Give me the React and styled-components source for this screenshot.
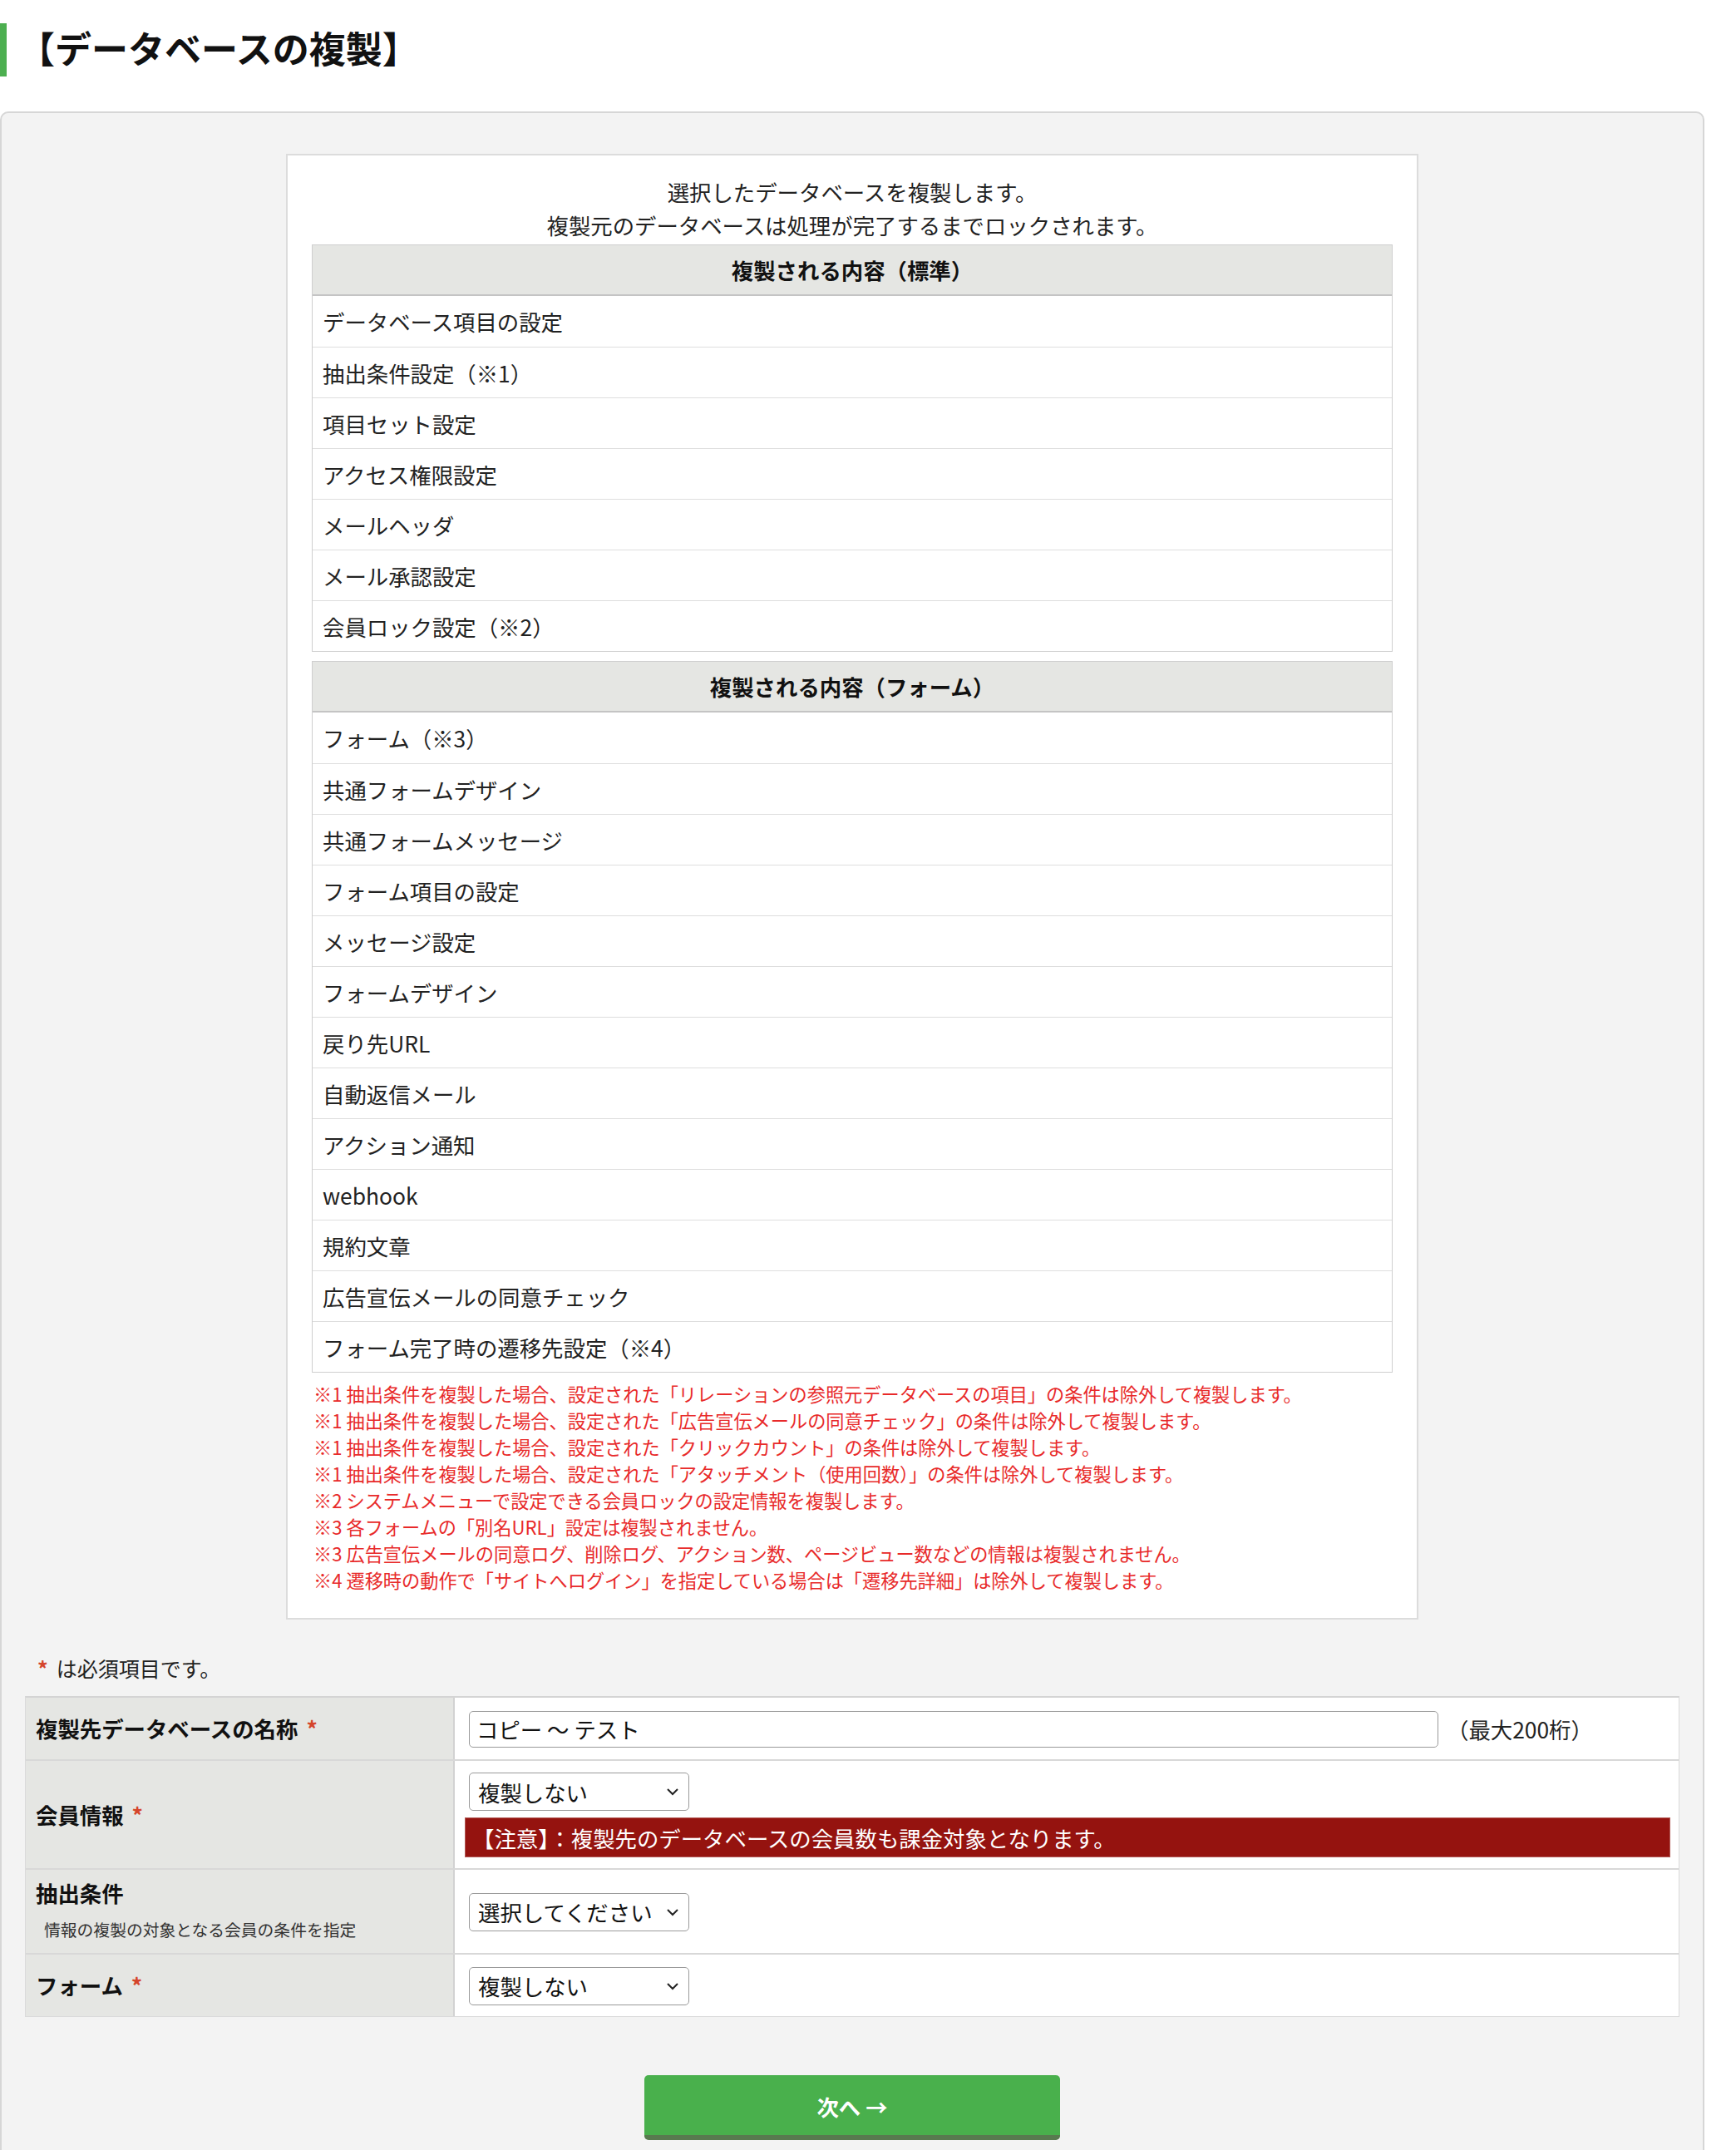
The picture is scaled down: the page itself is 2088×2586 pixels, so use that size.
import React from 'react';
import styled, { createGlobalStyle } from 'styled-components';

const GlobalStyle = createGlobalStyle`
  html, body {
    margin: 0;
    padding: 0;
    background: #fff;
  }
  body {
    font-family: "Noto Sans CJK JP", "Noto Sans", sans-serif;
    color: #222;
  }
`;

const Page = styled.div`
  width: 2088px;
`;

const Title = styled.h1`
  margin: 28px 0 0;
  height: 64px;
  box-sizing: border-box;
  border-left: 8px solid #4caf50;
  padding: 0 0 6px 14px;
  font-size: 44px;
  font-weight: 700;
  line-height: 58px;
  color: #111;
`;

const Panel = styled.div`
  margin-top: 42px;
  width: 2050px;
  box-sizing: border-box;
  border: 2px solid #d6d6d6;
  border-radius: 10px;
  background: #f3f3f3;
  padding: 49px 28px 40px;
`;

const InfoBox = styled.div`
  width: 1362px;
  box-sizing: border-box;
  margin: 0 auto;
  background: #fff;
  border: 2px solid #dcdcdc;
  padding: 24px 29px 30px;
`;

const Intro = styled.p`
  margin: 0 0 3px;
  text-align: center;
  font-size: 26.4px;
  line-height: 40px;
  color: #222;
`;

const List = styled.div`
  border: 1px solid #cfcfcf;
  font-size: 26.4px;
  & + & {
    margin-top: 11px;
  }
`;

const ListHead = styled.div`
  height: 61px;
  box-sizing: border-box;
  background: #e5e6e3;
  border-bottom: 2px solid #c4c4c4;
  display: flex;
  align-items: center;
  justify-content: center;
  font-weight: 700;
  color: #111;
`;

const ListRow = styled.div`
  height: 61px;
  box-sizing: border-box;
  padding: 0 12px;
  display: flex;
  align-items: center;
  background: #fff;
  border-top: 1px solid #dedede;
  &:nth-child(2) {
    border-top: none;
  }
`;

const Notes = styled.ul`
  list-style: none;
  margin: 9px 0 0;
  padding: 0 0 0 2px;
  font-size: 22.2px;
  line-height: 32px;
  color: #e82a2a;
`;

const Required = styled.p`
  margin: 38px 0 0;
  padding-left: 15px;
  font-size: 25px;
  line-height: 40px;
  color: #222;
`;

const Star = styled.span`
  color: #d5452b;
  font-weight: 700;
  margin: ${(p) => (p.$after ? '0 0 0 10px' : '0 10px 0 0')};
`;

const FormTable = styled.div`
  margin-top: 14px;
  border: 1px solid #dadada;
  border-top: 2px solid #d4d4d4;
  background: #fff;
`;

const FormRow = styled.div`
  display: grid;
  grid-template-columns: 516px 1fr;
  box-sizing: border-box;
  min-height: ${(p) => p.$h}px;
  & + & {
    border-top: 2px solid #d8d8d8;
  }
`;

const Label = styled.div`
  background: #e5e6e3;
  border-right: 2px solid #d2d2d2;
  padding: ${(p) => (p.$top ? '8px 12px 12px' : '0 12px')};
  display: flex;
  flex-direction: column;
  justify-content: ${(p) => (p.$top ? 'flex-start' : 'center')};
  font-size: 26.4px;
  line-height: 40px;
  font-weight: 700;
  color: #111;
`;

const SubLabel = styled.span`
  margin: 9px 0 0 10px;
  font-size: 19.8px;
  line-height: 30px;
  font-weight: 400;
  color: #333;
`;

const Value = styled.div`
  padding: 14px 10px 13px 12px;
  display: flex;
  flex-direction: column;
  justify-content: center;
  gap: 8px;
`;

const InputLine = styled.div`
  display: flex;
  align-items: center;
  gap: 10px;
  font-size: 26.4px;
`;

const TextInput = styled.input`
  width: 1166px;
  height: 44px;
  box-sizing: border-box;
  margin-left: 5px;
  padding: 0 8px;
  border: 1px solid #9a9a9a;
  border-radius: 5px;
  font-family: inherit;
  font-size: 26.4px;
  color: #111;
  background: #fff;
`;

const SelectWrap = styled.div`
  position: relative;
  width: 265px;
  height: 46px;
  margin-left: 5px;
`;

const Select = styled.select`
  appearance: none;
  width: 100%;
  height: 100%;
  box-sizing: border-box;
  padding: 0 40px 0 10px;
  border: 1px solid #9a9a9a;
  border-radius: 5px;
  background: #fff;
  font-family: inherit;
  font-size: 26.4px;
  color: #111;
`;

const Chevron = styled.svg`
  position: absolute;
  right: 12px;
  top: 18px;
  pointer-events: none;
`;

const Notice = styled.div`
  height: 48px;
  box-sizing: border-box;
  background: #95130f;
  border: 1px solid #b25a57;
  color: #fff;
  font-size: 26.4px;
  display: flex;
  align-items: center;
  padding-left: 8px;
`;

const NextButton = styled.button`
  display: flex;
  align-items: center;
  justify-content: center;
  margin: 70px auto 0;
  width: 500px;
  height: 78px;
  box-sizing: border-box;
  border: none;
  border-bottom: 6px solid #587a4f;
  border-radius: 5px;
  background: #49b04c;
  color: #fff;
  font-family: inherit;
  font-size: 26.4px;
  font-weight: 700;
  padding-top: 4px;
`;

const standard = [
  'データベース項目の設定',
  '抽出条件設定（※1）',
  '項目セット設定',
  'アクセス権限設定',
  'メールヘッダ',
  'メール承認設定',
  '会員ロック設定（※2）',
];

const forms = [
  'フォーム（※3）',
  '共通フォームデザイン',
  '共通フォームメッセージ',
  'フォーム項目の設定',
  'メッセージ設定',
  'フォームデザイン',
  '戻り先URL',
  '自動返信メール',
  'アクション通知',
  'webhook',
  '規約文章',
  '広告宣伝メールの同意チェック',
  'フォーム完了時の遷移先設定（※4）',
];

const notes = [
  '※1 抽出条件を複製した場合、設定された「リレーションの参照元データベースの項目」の条件は除外して複製します。',
  '※1 抽出条件を複製した場合、設定された「広告宣伝メールの同意チェック」の条件は除外して複製します。',
  '※1 抽出条件を複製した場合、設定された「クリックカウント」の条件は除外して複製します。',
  '※1 抽出条件を複製した場合、設定された「アタッチメント（使用回数）」の条件は除外して複製します。',
  '※2 システムメニューで設定できる会員ロックの設定情報を複製します。',
  '※3 各フォームの「別名URL」設定は複製されません。',
  '※3 広告宣伝メールの同意ログ、削除ログ、アクション数、ページビュー数などの情報は複製されません。',
  '※4 遷移時の動作で「サイトへログイン」を指定している場合は「遷移先詳細」は除外して複製します。',
];

const Dropdown = ({ options }) => (
  <SelectWrap>
    <Select defaultValue={options[0]}>
      {options.map((o) => (
        <option key={o}>{o}</option>
      ))}
    </Select>
    <Chevron width="16" height="10" viewBox="0 0 16 10">
      <polyline points="2,2 8,8 14,2" fill="none" stroke="#222" strokeWidth="2" />
    </Chevron>
  </SelectWrap>
);

const ContentList = ({ title, items }) => (
  <List>
    <ListHead>{title}</ListHead>
    {items.map((item) => (
      <ListRow key={item}>{item}</ListRow>
    ))}
  </List>
);

export default function App() {
  return (
    <Page>
      <GlobalStyle />
      <Title>【データベースの複製】</Title>
      <Panel>
        <InfoBox>
          <Intro>
            選択したデータベースを複製します。
            <br />
            複製元のデータベースは処理が完了するまでロックされます。
          </Intro>
          <ContentList title="複製される内容（標準）" items={standard} />
          <ContentList title="複製される内容（フォーム）" items={forms} />
          <Notes>
            {notes.map((n, i) => (
              <li key={i}>{n}</li>
            ))}
          </Notes>
        </InfoBox>

        <Required>
          <Star>*</Star>は必須項目です。
        </Required>

        <FormTable>
          <FormRow $h={74}>
            <Label>
              <div>
                複製先データベースの名称<Star $after>*</Star>
              </div>
            </Label>
            <Value>
              <InputLine>
                <TextInput defaultValue="コピー ～ テスト" />
                <span>（最大200桁）</span>
              </InputLine>
            </Value>
          </FormRow>
          <FormRow $h={131}>
            <Label>
              <div>
                会員情報<Star $after>*</Star>
              </div>
            </Label>
            <Value>
              <Dropdown options={['複製しない', '複製する']} />
              <Notice>【注意】：複製先のデータベースの会員数も課金対象となります。</Notice>
            </Value>
          </FormRow>
          <FormRow $h={102}>
            <Label $top>
              <div>抽出条件</div>
              <SubLabel>情報の複製の対象となる会員の条件を指定</SubLabel>
            </Label>
            <Value>
              <Dropdown options={['選択してください', '複製しない', '複製する']} />
            </Value>
          </FormRow>
          <FormRow $h={76}>
            <Label>
              <div>
                フォーム<Star $after>*</Star>
              </div>
            </Label>
            <Value>
              <Dropdown options={['複製しない', '複製する']} />
            </Value>
          </FormRow>
        </FormTable>

        <NextButton type="button">次へ →</NextButton>
      </Panel>
    </Page>
  );
}
